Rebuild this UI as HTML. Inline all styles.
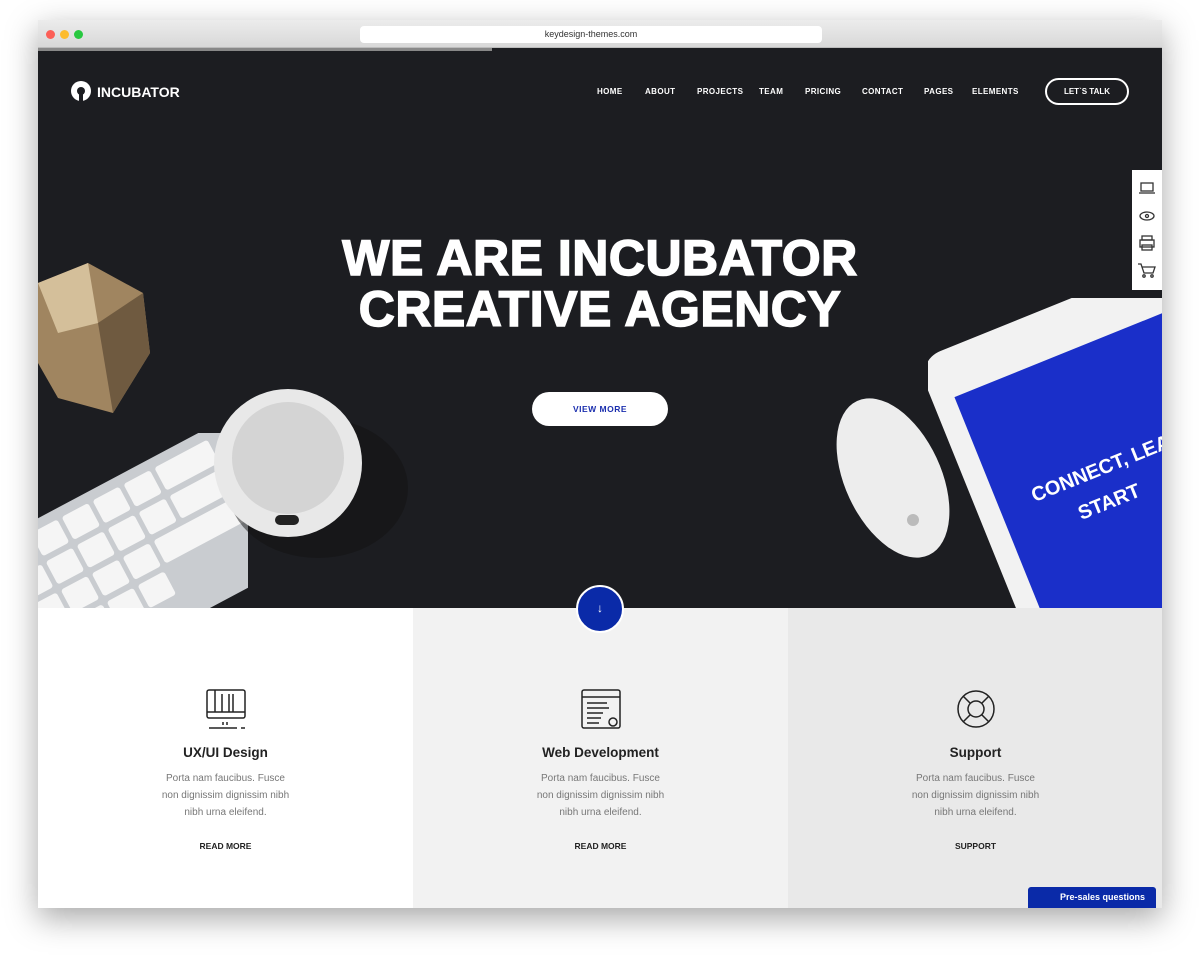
<!DOCTYPE html>
<html><head><meta charset="utf-8"><style>
*{margin:0;padding:0;box-sizing:border-box}
body{width:1200px;height:962px;background:#fff;font-family:"Liberation Sans",sans-serif;position:relative;overflow:hidden}
.win{position:absolute;left:38px;top:20px;width:1124px;height:888px;box-shadow:0 10px 30px rgba(0,0,0,.35);background:#fff;overflow:hidden}
.bar{position:absolute;left:0;top:0;width:1124px;height:28px;background:linear-gradient(#ececec,#d8d8d8);border-bottom:1px solid #bbb}
.dot{position:absolute;top:10px;width:9px;height:9px;border-radius:50%}
.url{position:absolute;left:322px;top:6px;width:462px;height:17px;background:#fff;border-radius:4px;font-size:9px;text-align:center;line-height:17px;color:#333}
.hero{position:absolute;left:0;top:28px;width:1124px;height:560px;background:#1c1d21;overflow:hidden}
.prog{position:absolute;left:0;top:0;width:454px;height:3px;background:#888}
.logo{position:absolute;left:33px;top:33px;color:#fff;font-weight:bold;font-size:14px;display:flex;align-items:center;gap:6px}
.nav{position:absolute;top:39px;left:559px;color:#fff;font-size:8px;font-weight:bold;letter-spacing:.4px}
.nav span{position:absolute;white-space:nowrap}
.talk{position:absolute;left:1007px;top:30px;width:84px;height:27px;border:2px solid #fff;border-radius:14px;color:#fff;font-size:8px;font-weight:bold;text-align:center;line-height:23px}
h1{position:absolute;left:0;width:1124px;top:185px;text-align:center;color:#fff;font-size:50px;line-height:51px;font-weight:900;letter-spacing:0.5px;-webkit-text-stroke:1.5px #fff}
.vm{position:absolute;left:494px;top:344px;width:136px;height:34px;background:#fff;border-radius:17px;color:#1b2fae;font-size:8.5px;font-weight:bold;text-align:center;line-height:34px;letter-spacing:.5px}
.side{position:absolute;left:1094px;top:122px;width:30px;height:120px;background:#fff}
.cols{position:absolute;left:0;top:588px;width:1124px;height:300px}
.col{position:absolute;top:0;width:375px;height:300px;text-align:center}
.col h3{position:absolute;top:137px;width:100%;font-size:13.5px;color:#222}
.col p{position:absolute;top:162px;width:100%;font-size:10px;line-height:17px;color:#777}
.col b{position:absolute;top:233px;width:100%;font-size:8.5px;color:#222;display:block}
.col svg{position:absolute;left:167px;top:80px}
.down{position:absolute;left:538px;top:565px;width:48px;height:48px;border-radius:50%;background:#0a2aa8;border:2px solid #fff;color:#fff;text-align:center;line-height:42px;font-size:12px}
.chat{position:absolute;left:990px;top:867px;width:128px;height:21px;background:#0a2aa8;border-radius:3px 3px 0 0;color:#fff;font-size:9px;font-weight:bold;line-height:21px;padding-left:32px}
</style></head><body>
<div class="win">
<div class="bar"><div class="dot" style="left:8px;background:#fc5f57"></div><div class="dot" style="left:22px;background:#fdbc2e"></div><div class="dot" style="left:36px;background:#28c840"></div><div class="url">keydesign-themes.com</div></div>
<div class="hero">
<div class="prog"></div>
<svg style="position:absolute;left:0;top:215px" width="115" height="160"><polygon points="0,20 50,0 105,30 112,90 75,150 20,135 0,100" fill="#a08560"/><polygon points="0,20 50,0 60,60 20,70" fill="#d4bf9a"/><polygon points="60,60 105,30 112,90 75,150" fill="#6f5a40"/></svg>
<svg style="position:absolute;left:0;top:385px" width="210" height="175"><g transform="rotate(-28 100 100)"><rect x="-40" y="40" width="260" height="160" rx="10" fill="#c9ccd0"/><g fill="#f5f5f5"><rect x="-30" y="50" width="30" height="26" rx="3"/><rect x="5" y="50" width="30" height="26" rx="3"/><rect x="40" y="50" width="30" height="26" rx="3"/><rect x="75" y="50" width="30" height="26" rx="3"/><rect x="110" y="50" width="30" height="26" rx="3"/><rect x="145" y="50" width="60" height="26" rx="3"/><rect x="-30" y="82" width="30" height="26" rx="3"/><rect x="5" y="82" width="30" height="26" rx="3"/><rect x="40" y="82" width="30" height="26" rx="3"/><rect x="75" y="82" width="30" height="26" rx="3"/><rect x="110" y="82" width="30" height="26" rx="3"/><rect x="145" y="82" width="60" height="26" rx="3"/><rect x="-30" y="114" width="30" height="26" rx="3"/><rect x="5" y="114" width="30" height="26" rx="3"/><rect x="40" y="114" width="30" height="26" rx="3"/><rect x="75" y="114" width="30" height="26" rx="3"/><rect x="110" y="114" width="95" height="26" rx="3"/><rect x="-30" y="146" width="30" height="26" rx="3"/><rect x="5" y="146" width="30" height="26" rx="3"/><rect x="40" y="146" width="30" height="26" rx="3"/><rect x="75" y="146" width="30" height="26" rx="3"/></g></g></svg>
<svg style="position:absolute;left:170px;top:340px" width="240" height="200"><ellipse cx="110" cy="100" rx="90" ry="70" fill="#111" opacity=".5"/><circle cx="80" cy="75" r="74" fill="#e8e8e8"/><circle cx="80" cy="70" r="56" fill="#d4d4d4"/><rect x="67" y="127" width="24" height="10" rx="5" fill="#222"/></svg>
<svg style="position:absolute;left:795px;top:345px" width="130" height="175"><g transform="rotate(-25 60 85)"><ellipse cx="60" cy="85" rx="48" ry="85" fill="#ededed"/></g><circle cx="80" cy="127" r="6" fill="#bbb"/></svg>
<svg style="position:absolute;left:890px;top:250px" width="234" height="310"><g transform="rotate(-22 150 170)"><rect x="40" y="10" width="270" height="380" rx="26" fill="#f2f2f2"/><rect x="62" y="58" width="226" height="300" fill="#1a2fc9"/></g><text x="100" y="190" fill="#fff" font-size="20" font-weight="bold" transform="rotate(-22 140 180)" font-family="Liberation Sans">CONNECT, LEA</text><text x="150" y="215" fill="#fff" font-size="20" font-weight="bold" transform="rotate(-22 170 210)" font-family="Liberation Sans">START</text></svg>
<div class="logo"><svg width="20" height="22" viewBox="0 0 20 22"><circle cx="10" cy="10" r="10" fill="#fff"/><circle cx="10" cy="10" r="4" fill="#1c1d21"/><rect x="8" y="12" width="4" height="10" fill="#1c1d21"/></svg>INCUBATOR</div>
<div class="nav"><span style="left:0">HOME</span><span style="left:48px">ABOUT</span><span style="left:100px">PROJECTS</span><span style="left:162px">TEAM</span><span style="left:208px">PRICING</span><span style="left:265px">CONTACT</span><span style="left:327px">PAGES</span><span style="left:375px">ELEMENTS</span></div>
<div class="talk">LET`S TALK</div>
<h1>WE ARE INCUBATOR<br>CREATIVE AGENCY</h1>
<div class="vm">VIEW MORE</div>
<div class="side"><svg width="30" height="120" fill="none" stroke="#333" stroke-width="1.3"><rect x="9" y="13" width="12" height="8"/><path d="M7 23h16"/><ellipse cx="15" cy="46" rx="7" ry="4"/><circle cx="15" cy="46" r="1.5"/><rect x="8" y="70" width="14" height="7"/><rect x="10" y="66" width="10" height="4"/><rect x="10" y="75" width="10" height="5"/><path d="M6 94h3l3 9h9l2-6H10"/><circle cx="12" cy="106" r="1.2"/><circle cx="20" cy="106" r="1.2"/></svg></div>
</div>
<div class="cols">
<div class="col" style="left:0;background:#fff"><svg width="42" height="42" fill="none" stroke="#222" stroke-width="1.5"><rect x="2" y="2" width="38" height="28" rx="2"/><path d="M2 24h38M10 2v22M17 6v18M24 6v18M28 6v18M18 34v3M22 34v3M4 40h28M36 40h4"/></svg><h3>UX/UI Design</h3><p>Porta nam faucibus. Fusce<br>non dignissim dignissim nibh<br>nibh urna eleifend.</p><b>READ MORE</b></div>
<div class="col" style="left:375px;background:#f2f2f2"><svg width="42" height="42" fill="none" stroke="#222" stroke-width="1.5"><rect x="2" y="2" width="38" height="38" rx="2"/><path d="M2 9h38M7 15h20M7 20h22M7 25h16M7 30h14M7 35h12"/><circle cx="33" cy="34" r="4"/></svg><h3>Web Development</h3><p>Porta nam faucibus. Fusce<br>non dignissim dignissim nibh<br>nibh urna eleifend.</p><b>READ MORE</b></div>
<div class="col" style="left:750px;background:#e9e9e9"><svg width="42" height="42" fill="none" stroke="#222" stroke-width="1.5"><circle cx="21" cy="21" r="18"/><circle cx="21" cy="21" r="8"/><path d="M15 15L8 8M27 15l7-7M15 27l-7 7M27 27l7 7"/></svg><h3>Support</h3><p>Porta nam faucibus. Fusce<br>non dignissim dignissim nibh<br>nibh urna eleifend.</p><b>SUPPORT</b></div>
</div>
<div class="down">↓</div>
<div class="chat">Pre-sales questions</div>
</div>
</body></html>
